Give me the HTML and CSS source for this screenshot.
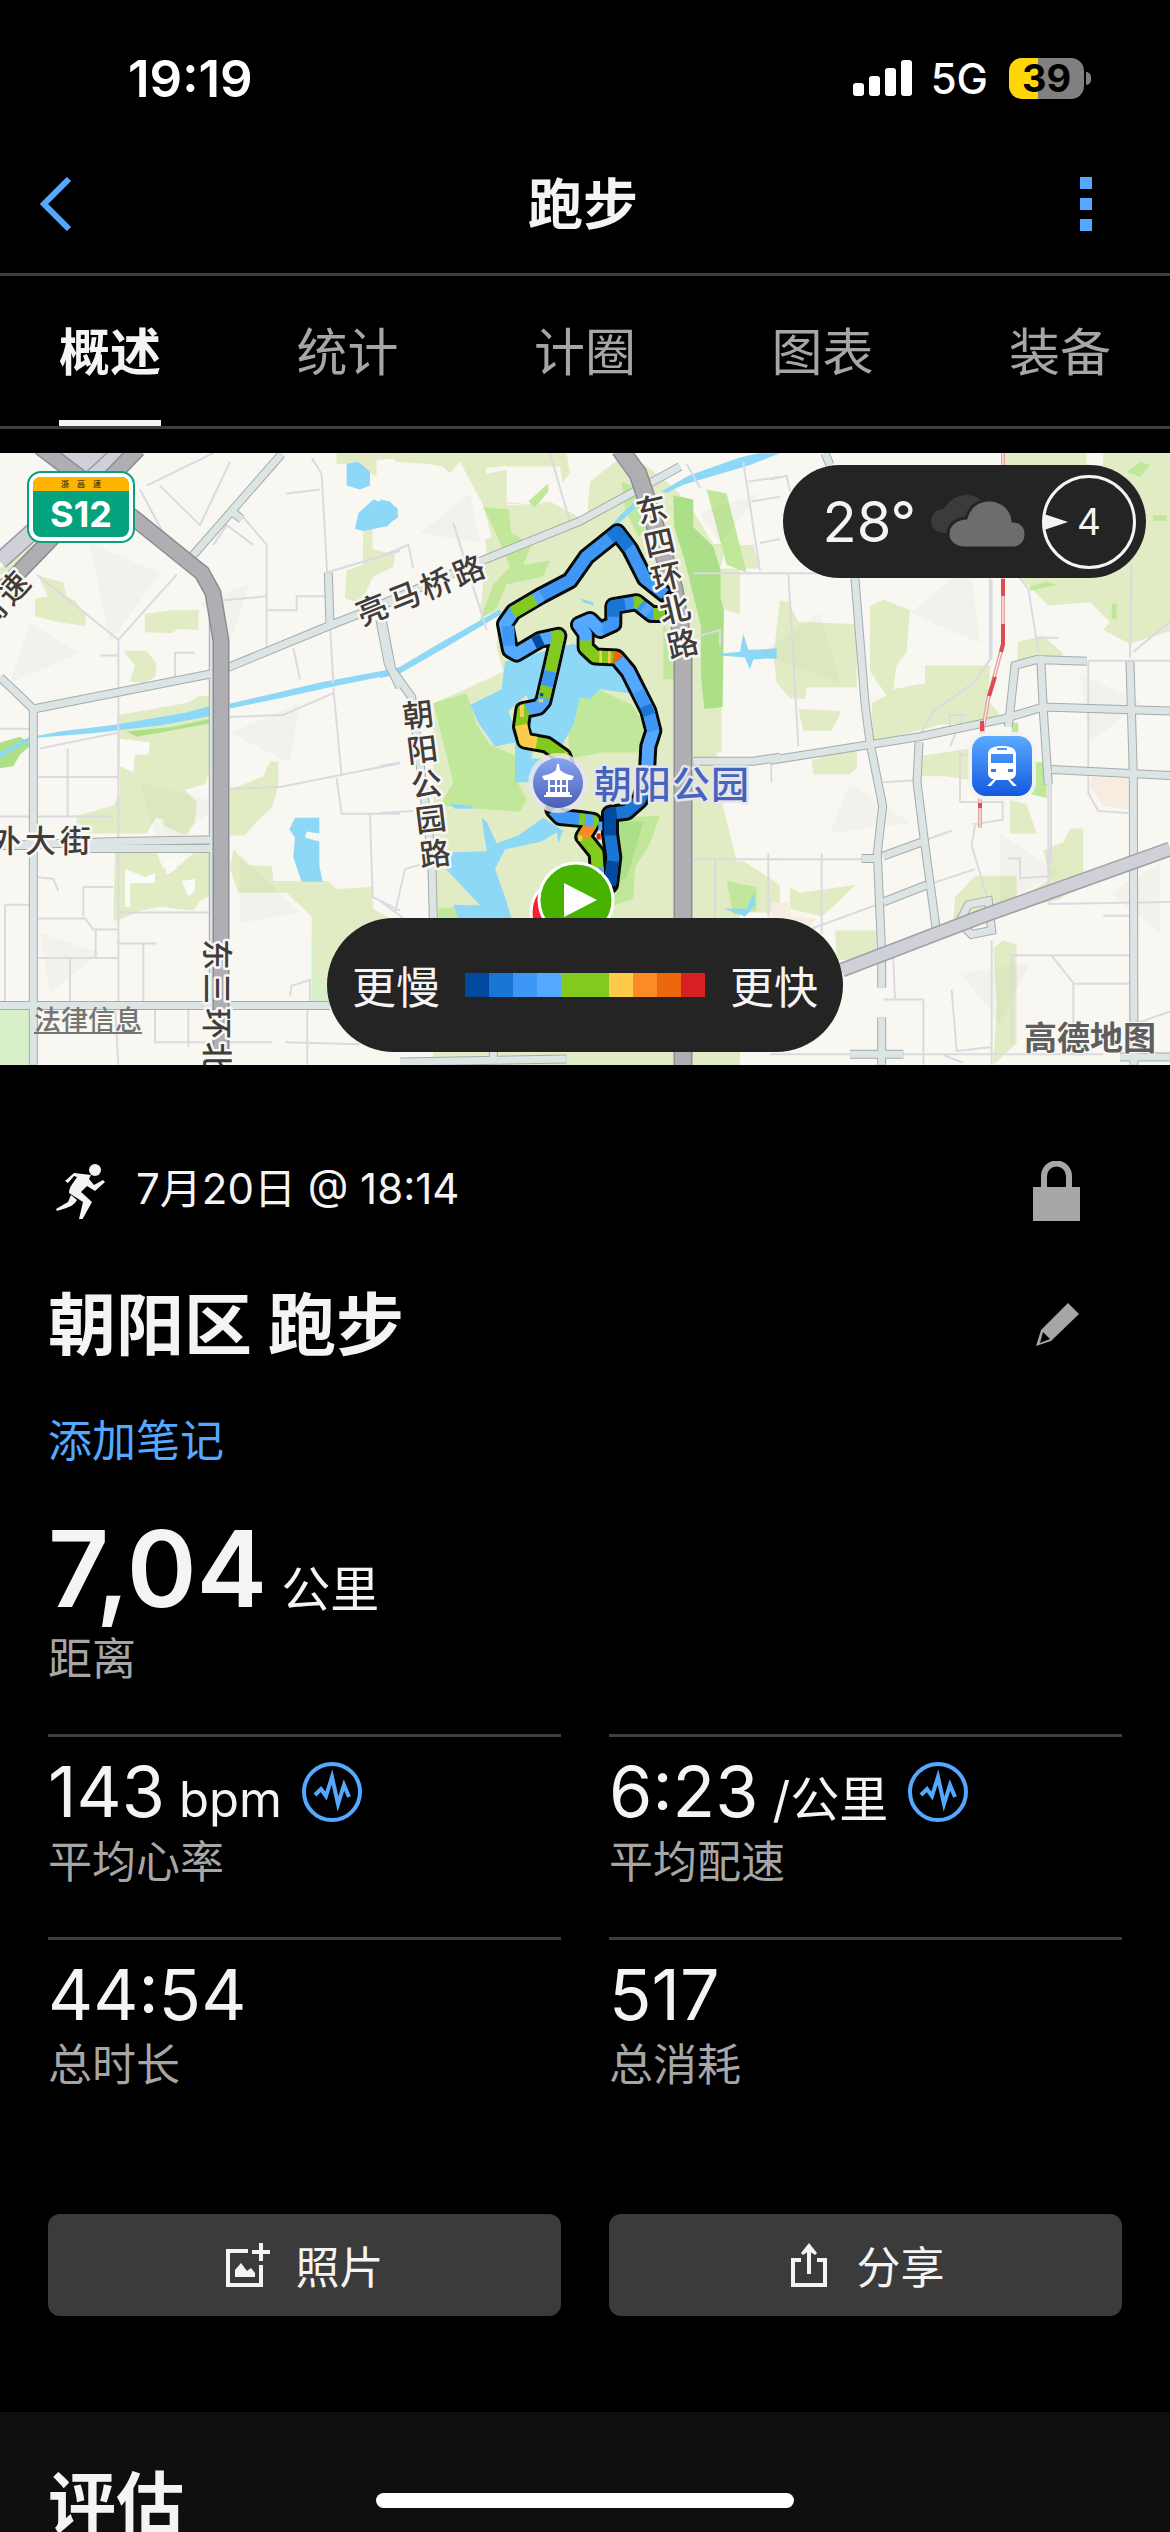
FILE: index.html
```html
<!DOCTYPE html>
<html lang="zh-CN">
<head>
<meta charset="utf-8">
<meta name="viewport" content="width=device-width, initial-scale=1">
<title>跑步</title>
<link rel="stylesheet" href="styles.css">
</head>
<body>
<div class="app">
  <div class="status">
    <span class="clock">19:19</span>
    <div class="status-right">
      <svg class="signal" viewBox="0 0 59 38" aria-hidden="true"><g fill="#fff"><rect y="24" width="11" height="13" rx="3"/><rect x="16" y="17" width="11" height="20" rx="3"/><rect x="32" y="9" width="11" height="28" rx="3"/><rect x="48" y="1" width="11" height="36" rx="3"/></g></svg>
      <span class="network">5G</span>
      <div class="battery"><span class="battery-body">39</span><span class="battery-nub"></span></div>
    </div>
  </div>

  <header class="header">
    <button class="icon-btn back" aria-label="返回"><svg width="32" height="54" viewBox="0 0 32 54"><path d="M29 2 4 27l25 25" fill="none" stroke="#55a8ff" stroke-width="6"/></svg></button>
    <h1>跑步</h1>
    <button class="icon-btn" aria-label="更多"><svg width="12" height="54" viewBox="0 0 12 54"><path d="M0 0h12v12H0zM0 21h12v12H0zM0 42h12v12H0z" fill="#55a8ff"/></svg></button>
  </header>

  <nav class="tabs">
    <a class="active" href="#overview">概述</a>
    <a href="#stats">统计</a>
    <a href="#laps">计圈</a>
    <a href="#charts">图表</a>
    <a href="#gear">装备</a>
  </nav>

  <main class="content">
    <section class="map">
      <svg class="map-art" viewBox="0 0 1170 612" role="img" aria-label="路线地图">
        <defs>
          <linearGradient id="poi" x1="0" y1="0" x2="0" y2="1"><stop offset="0" stop-color="#86a3f0"/><stop offset="1" stop-color="#4a5fb9"/></linearGradient>
          <linearGradient id="rail" x1="0" y1="0" x2="0" y2="1"><stop offset="0" stop-color="#5aaaff"/><stop offset="1" stop-color="#1459e0"/></linearGradient>
        </defs>
        <rect width="1170" height="612" fill="#f8f7f2"/>

        <!-- parks and water -->
        <g transform="matrix(.3333 0 0 .3954 0 -3)">
          <g fill="#e1ecc4">
            <path d="M85 240 135 235 60 310 0 315V300zM115 318l75 17 10 35 25 10 33 40-3 25-85-10-65-15v-45l40-3zM435 415l80-10h82l-2 50-60-2-20 10-80-2zM370 508h70l30 32-5 35-35 15-40-5 15-40z"/>
            <path d="M355 670l205-30 40-18h35v178l-20 45-60 15 35 30-5 50-25 35-70-25-50 20H230v-45l110-25 20-30zM345 1015l125 5 20 40 50-10 40-30h60v105l-40 15-20 25-100-10-60 10-65 25h-15z"/>
            <path d="M690 860l100-35 20-37h25v62l-20 55-45 35-35 35h-45zM700 1010l45 40 70 2 5 38 165 0 25 20 105-5 5 55 80 40v200H935v-220l-75-60H715l-25-60zM1010 8h190v12l-70 5v40l-90-30h-30zM1090 200h28v50l67 15-5 30-60 25-40 70-45-15 5-70 48-15z"/>
          </g>
          <path fill="#fafaf6" d="M375 1060l60 20 30-10v25h-75v60h-15zM545 1090l40-5v30l-20 15zM490 1035l40-5v30l-30 15zM360 730l90 10-5 30-40 0-5 45-40-15zM468 930l22 5v35h-50z"/>
          <path fill="#aee08a" d="M0 740l60-15 35 20-35 25-20 30-40 5zM380 712l140-12 120-22v12l-130 20-100 15z"/>
          <path fill="#d8f0c9" d="M0 1410h90v145H0zM945 1345h50v60h-60v-167h10z"/>
          <g fill="#8dd8f6">
            <path d="M0 765l85-38 95-15 170-18 210-30 75-18v26l-150 24-200 20-175 12-25 10-85 40zM688 642l162-32 110-22 240-38v14l-200 34-150 28-160 28zM1040 35l35-5 35 25v35l-30 10-40-10zM1065 200l10-40 45-35 70 20 5 25-45 25-60 10zM885 930h73v40l-38-5-5 15 43 10v60l10 42-63 0-25-62 5-50-17-20z"/>
          </g>
        </g>
        <g transform="matrix(.3333 0 0 .3954 380 -3)">
          <path fill="#e1ecc4" d="M20 8H560l10 50-60 70-60 12-70-5V40l-60 5-50 65-20-60-110-15-90-5zM320 60l60-10v90h70l60-10 110 50 10-100 90-60 70 15 90 60 150 130 50 10v530h-70v70l70 240v530H160V640l110-40 100-40-20-60 5-80-55-10 20-150-20-130-90-70-60-52h150zM1020 300h120l-20-60h-80zM940 1040h150l110 60v70H940z"/>
          <path fill="#f8f7f2" d="M380 42h160l15 80-105 15-70-5zM240 30l70 110 25 80-60 20-100-30-20-100zM870 8h330v230h-200l-80-110zM1025 400l175 50v320h-175z"/>
          <path fill="#c1e79a" d="M310 145l75 5 10 60 60 30-25 50 80-10-20 40-110 20-30 60-50 30 40-90 50-45-40-80zM445 130l60-45v20l-40 40zM160 640l100-25 30 80 40 50 80 30 0 60 30 50-20 30-240-15 40-60zM600 620l55-15 100 40 35 40-5 80-120 0-95 15-5-60zM700 930l140-5-30 70-45 60-5 80-70 20zM725 80l60 20 30 80-40 40-40-70zM850 430l35 80v70h-35zM1040 1090l90 15 0 60-70 10zM175 1160l120-10 20 40H175zM980 100l60 10 60 200-60-20z"/>
          <path fill="#abdf88" d="M880 115l60 10v70l60 50 22 60v70l10 30-4 245-55 5-10-80v-130l-50-170-30-80zM710 940l80 0-20 60-30 80-40 20z"/>
          <path fill="#8dd8f6" d="M375 535l205-45 90 20 60 60 20 45-90-10-30 25-30-5-20 70-40 60h-80l-10 40 40 25-10 20h-75v-100l-60 10-50-60-25-45 95-40zM415 780h80l30 60H405v-60zM200 1018l120-3-15-85 15 10 30 55 65-20 75-45 55 30-60 30-110 20-30 50 30 70 20 55H235l-15-35 80 2-60-55-40-35zM600 375l40 10v8l-30-8zM210 895l60 4 15 8-60 0zM530 965l20-5-15 35zM1020 515l60-5 10-45 15 40 95-2v22l-80 5-10 25-15-30-75-5zM1030 1160l70 0 20-40 6 30-30 30zM0 125l30 5 25 22-15 25-20 18-20-5zM720 165l60-45-5 20-70 55-15 0zM845 105l80-40 150-45 60-12h65l-90 30-200 50-50 20zM0 568l60-20 120-60 180-85 5 12-170 85-135 65-60 12z"/>
          <path fill="#e1ecc4" d="M410 640l30-20 15 40-50 20zM385 660l20-15v60z"/>
        </g>
        <g transform="matrix(.3333 0 0 .3954 770 -3)">
          <path fill="#e1ecc4" d="M30 380l25 5 30 50 175 5v160H110l-5 30-45-2-40-40-10-68 10-70zM300 395l40-17 80 27-10 105-30 35-10 60 95-15 0-45h195l-5 90 45 45-70 10-120 5-200 45-5-100 45-20-50-60zM700 8h250l0 30 50 0V8h200v450l-120 32-80-35 20-20-60-50-125 8-75-63-60-20zM745 485l75-15 60 45-20 20-120 10zM125 785l135-40 0 60-20 15H130zM440 775l160-20v80l-70-10-90 0zM720 885l50 10 30 75h-80zM820 1012l60-20 20-35h40v120l-70 60-320 60 5-65 60-55h125v60l100-50zM60 1105l30 15 165-20-60 50-40 30-95-20zM195 1215h125v75l-120 0zM670 1260l30-20 40 10v250l-70 55 10-155zM85 655l130 5-30 50-85 0z"/>
          <path fill="#bfe89a" d="M725 690h20v30h-20zM780 790h50v90l-50-10zM1070 55l40-25 30 8-30 30zM1150 165h40v14h-40zM780 345l50-12 30 8-80 15zM1025 388h15v40h-15z"/>
          <path fill="#f6ecdf" d="M965 825h110v85l-75-10-40-50zM5 1145l50 0 10 35 75 5-20 20H5z"/>
          <path fill="#8dd8f6" d="M0 502h20v26H0z"/>
        </g>

        <!-- soft relief facets -->
        <g fill="#8b8b70" opacity=".05"><path d="M90 90 160 120 110 190zM30 170l50 30-70 30zM200 150l50-20-20 60zM140 330l80 20-60 50zM230 280l70-30-10 60zM240 400l60 60-60 10zM40 480l60 20-50 40zM420 80l50-40 10 50zM700 60l60-20-40 50zM760 200l60-40 20 70zM850 330l60 40-80 10zM910 160l60-50 10 80zM1000 380l60 40-60 30zM1080 220l60 30-50 40zM760 480l60 30-50 30zM960 520l70-10-30 60zM1110 440l50-30v70z"/></g>

        <!-- side streets -->
        <g class="lane">
          <g transform="matrix(.3333 0 0 .3954 0 -3)">
            <path d="M355 480V1400M355 480l175-165M355 480 110 315M0 705h100M120 755l240-41M115 827h240M0 927h340M203 755v172M690 675l160-5 150-55M1000 590l-35-530-30-40M980 310l220-55M800 500V240l-90-90M670 380l130-10M800 405h90v-35h90M690 857l150-5 360-60M1000 600l25 225M1010 830l15 90h175M1110 920l8 210 82 35M300 520h55M525 575v-62h60M440 90l200-82M420 100l70 110M480 90l120 100 90-160M110 1080l50 5 15 30M15 1150h75M15 1150v260M110 1185h145l25 28h75M287 1215v70M110 1285h245M210 1285v115M350 1248h120M430 1248v155M355 1170h285M345 1400l10 155M465 1400v98h350M855 1498l225 5M922 1410v145M870 1380l5-25 55-15v60M565 1400v110M250 1105h90M250 1105v75M640 240l40-50 80 50M860 110l100-10M990 440l10 150M880 500l20 80"/>
          </g>
          <g transform="matrix(.3333 0 0 .3954 380 -3)">
            <path d="M510 8l60 175M220 185l100 270M0 270l85-30 15 60M940 312h260M1090 30l50 275M1105 80l95-12M1115 130l85-12M920 35l40 60M0 800l60-10M0 918l100-5M75 1060l80-20M75 1060l-30 110M0 1140l80 50M940 1035h260M1165 1020v160M1005 1035v150M960 470l60-15v40M1140 235l60-10M1174 780v60M60 1548h500"/>
          </g>
          <g transform="matrix(.3333 0 0 .3954 770 -3)">
            <path d="M0 312h240M55 310l30 440M0 75l50-10 10 40M660 325v205l-50 60-120 70-40 60M540 750l40-80h-40v40M745 320l30 30 30 160M1085 285l-5 240M1090 510l110-75M955 533v335l30 45 90 5M955 533h245M835 845v300M843 845v200M835 1148l365-5M0 1035h320M155 1020v205M110 1215l210-65M370 1285l5 105M340 1390h120v165M545 1365l15 155 105-10M665 1240v315M725 1500v-222h355M845 1278l65 70v142M910 1350h170M715 1033h35v50l85-5M615 950l-10 50 50 140M490 1095l125-35M470 985l75-22M340 840l100-5M570 890V770h35M570 890h128v45l-90 12M1000 1178h80M0 1528h1000M800 475h65M520 1530l60 20M1100 1450l100-30M665 330v200"/>
          </g>
        </g>

        <!-- secondary roads: casing, then fill -->
        <g class="road-case">
          <g transform="matrix(.3333 0 0 .3954 0 -3)"><path d="M0 575l45 35 55 45v900M100 655l540-90 50-17 310-108 200-65M845 10 570 275M695 155l30 20M0 1405h990M985 310l5 130M1140 430l25 110 35 60M640 400v1000M420 190l150 90M0 1000h100M640 986 350 990 0 1000M640 1008 270 1008"/></g>
          <g transform="matrix(.3333 0 0 .3954 380 -3)"><path d="M0 392l320-117 280-95 300-138M0 400l35 155 60 70 60 400 5 160M940 787h180l80-10M60 1548l500-8M340 1520v25"/></g>
          <g transform="matrix(.3333 0 0 .3954 770 -3)"><path d="M165 8l15 30M255 325l30 315 15 100 38 160-16 120 13 250v90M335 1435v120M0 785l450-60 250-45 120-30 380 10M447 740l-6 100 24 160 35 220M340 1027l120-37M340 1143l130-43M715 700l20-155 65-15 150 4M812 520l8 140 15 185M845 808l355 15M1080 535l10 285 2 735M240 1528h160M1050 1535h150M275 1033h50M570 1190l25-40 60-10 10 75-60 10-30-25"/></g>
        </g>
        <g class="road">
          <g transform="matrix(.3333 0 0 .3954 0 -3)"><path d="M0 575l45 35 55 45v900M100 655l540-90 50-17 310-108 200-65M845 10 570 275M695 155l30 20M0 1405h990M985 310l5 130M1140 430l25 110 35 60M640 400v1000M420 190l150 90M0 1000h100M640 986 350 990 0 1000M640 1008 270 1008"/></g>
          <g transform="matrix(.3333 0 0 .3954 380 -3)"><path d="M0 392l320-117 280-95 300-138M0 400l35 155 60 70 60 400 5 160M940 787h180l80-10M60 1548l500-8M340 1520v25"/></g>
          <g transform="matrix(.3333 0 0 .3954 770 -3)"><path d="M165 8l15 30M255 325l30 315 15 100 38 160-16 120 13 250v90M335 1435v120M0 785l450-60 250-45 120-30 380 10M447 740l-6 100 24 160 35 220M340 1027l120-37M340 1143l130-43M715 700l20-155 65-15 150 4M812 520l8 140 15 185M845 808l355 15M1080 535l10 285 2 735M240 1528h160M1050 1535h150M275 1033h50M570 1190l25-40 60-10 10 75-60 10-30-25"/></g>
        </g>

        <!-- expressways -->
        <path d="M45 0h87L90 30H75z" fill="#d0d0d8"/>
        <g fill="none">
          <path d="M125-5 0 108" stroke="#9c9ca4" stroke-width="18"/><path d="M125-5 0 108" stroke="#d0d0d8" stroke-width="15"/>
          <path d="M842 517 983 463 1170 396" stroke="#a0a0a8" stroke-width="15"/><path d="M842 517 983 463 1170 396" stroke="#d0d0d8" stroke-width="12"/>
          <path d="M138-4 24 114 0 139M40-6l95 72 67 54 11 20 8 48v428" stroke="#8d8d93" stroke-width="17"/>
          <path d="M138-4 24 114 0 139M40-6l95 72 67 54 11 20 8 48v428" stroke="#aeaeb3" stroke-width="14"/>
          <path d="M620-4l18 25 12 35 24 80 9 55v425" stroke="#8d8d93" stroke-width="19"/>
          <path d="M620-4l18 25 12 35 24 80 9 55v425" stroke="#aeaeb3" stroke-width="16"/>
          <path d="M1003 0v191l-15 56-6 35M980 345v30" stroke="#e9a3a3" stroke-width="4"/>
          <path d="M1003 0v191l-15 56-6 35M980 345v30" stroke="#fff" stroke-width="1"/>
          <path d="M1003 126v17m0 28v20l-2 8m-6 25-6 19m-7 25v10m-2 72v5" stroke="#dd4c50" stroke-width="4"/>
        </g>

        <!-- recorded track, coloured by pace -->
        <g transform="matrix(.3333 0 0 .3954 380 -3)">
          <g class="track-case">
            <path d="M855 415H815L770 385 700 395V440L660 455 630 430 597 442 617 465V500L645 522 710 525 745 560 805 660 820 710 805 750 800 830 780 885 740 915 690 920V970L700 1030 690 1100"/>
            <path d="M855 365 795 325 750 250 712 208 620 270 570 330 480 370 400 410 375 440 390 505 410 515 480 480 535 470 515 545 490 635 475 650 430 658 423 700 435 735 500 745 550 775 560 800M520 910 540 928 600 933 640 938 610 978 650 1020 655 1090"/>
          </g>
          <g class="track">
            <path stroke="#3f97f5" d="M855 365 795 325 750 250 712 208 620 270 570 330 480 370 400 410"/>
            <path stroke="#1a76d5" d="M748 247 712 208 690 223"/>
            <path stroke="#55a8ff" d="M485 368 400 410 375 440 390 505 410 515 480 480 535 470 515 545 490 635 475 650 430 658"/>
            <path stroke="#83ca1f" d="M465 378 398 411"/>
            <path stroke="#004b9f" d="M462 489 486 479"/>
            <path stroke="#83ca1f" d="M515 474 535 470 515 545 511 560M500 597 492 628M440 656 430 658 423 700 435 735 500 745 550 775 560 800"/>
            <path stroke="#3f97f5" d="M385 445 387 495M511 560 500 597"/>
            <path stroke="#fdca4c" d="M424 695 435 735 470 741M420 660H432M543 771 552 785"/>
            <path stroke="#3f97f5" d="M855 415H815L770 385 700 395V440L660 455 630 430 597 442 617 465V500"/>
            <path stroke="#1a76d5" d="M735 390 700 395V422"/>
            <path stroke="#83ca1f" d="M855 415H820M762 386 770 385 780 392M617 480V500L645 522 710 525"/>
            <path stroke="#55a8ff" d="M808 410 790 398M665 453 660 455 630 430 597 442 617 465V482"/>
            <path stroke="#fdca4c" d="M658 523H666M684 524H692"/><path stroke="#eb680e" d="M700 524 710 525 716 531"/>
            <path stroke="#55a8ff" d="M716 531 745 560 805 660 820 710 805 750 800 830 780 885"/>
            <path stroke="#3f97f5" d="M775 610 805 660 820 710"/>
            <path stroke="#1a76d5" d="M797 647 808 670M803 800 800 830 780 885 740 915 690 920V970L700 1030 690 1100"/>
            <path stroke="#004b9f" d="M710 918 690 920V975M699 1040 690 1100"/>
            <path stroke="#3f97f5" d="M520 910 540 928 600 933"/>
            <path stroke="#83ca1f" d="M598 933 640 938 610 978 650 1020 655 1090"/>
            <path stroke="#fb8a27" d="M632 948 610 978"/><path stroke="#55a8ff" d="M615 935 640 938M654 1055V1090"/>
          </g>
          <path fill="#d62021" d="M650 970h12v15h-12z"/><path fill="#55a8ff" d="M655 940h12v22h-12z"/><path fill="#fdca4c" d="M476 630h14v8h-14zM595 975h12v14h-12z"/><path fill="#004b9f" d="M480 615h10v8h-10z"/>
        </g>

        <!-- start and finish pins -->
        <circle cx="567" cy="460" r="36" fill="#ff1f2b" stroke="#fff" stroke-width="3"/>
        <circle cx="576" cy="447" r="37" fill="#47b300" stroke="#fff" stroke-width="3"/>
        <path d="M564 430v34l33-17z" fill="#fff"/>

        <!-- park marker -->
        <circle cx="558" cy="330" r="30" fill="#e6e6ea" opacity=".85"/>
        <circle cx="558" cy="330" r="25" fill="url(#poi)"/>
        <path fill="#fff" d="M557 311h2l1 6c3 3 8 5 14 6l-2 4h-28l-2-4c6-1 11-3 14-6zM548 327h2v13h-2zM555 327h2v13h-2zM560 327h2v13h-2zM566 327h2v13h-2zM548 332h20v2h-20zM546 339h24v3h-24zM544 342h28v2h-28z"/>

        <!-- station marker -->
        <rect x="968" y="279" width="68" height="68" rx="18" fill="#f2f2ef" opacity=".9"/>
        <rect x="972" y="283" width="60" height="60" rx="14" fill="url(#rail)"/>
        <path fill="#fff" fill-rule="evenodd" d="M988 301c0-6 6-8 14-8s14 2 14 8v19c0 4-3 6-6 6l7 7h-4l-5-6h-12l-5 6h-4l7-7c-3 0-6-2-6-6zM997 295v2h10v-2zM991 301v9h22v-9zM991 316v3h5v-3zM1008 316v3h5v-3z"/>

        <!-- highway shield -->
        <rect x="28" y="19" width="106" height="70" rx="13" fill="#fff" stroke="#05a27e" stroke-width="2"/>
        <rect x="33" y="24" width="96" height="60" rx="8" fill="#05a27e"/>
        <path d="M33 38v-6q0-8 8-8h80q8 0 8 8v6z" fill="#ffb400"/>
        <text class="shield-top" x="65 81 97" y="34">浙高速</text>
        <text class="shield" x="81" y="74">S12</text>

        <!-- road and place names -->
        <g class="label">
          <text transform="translate(362 173) rotate(-22)" x="0 35 69 104" y="0">亮马桥路</text>
          <text transform="translate(-12 180) rotate(-48)" x="0 35" y="0">高速</text>
          <text x="-10 25 60" y="399">外大街</text>
          <text transform="translate(404 275) rotate(-7)" x="0" y="0">朝<tspan x="0" y="35">阳</tspan><tspan x="0" y="70">公</tspan><tspan x="0" y="105">园</tspan><tspan x="0" y="140">路</tspan></text>
          <text transform="translate(639 71) rotate(-13)" x="0" y="0">东<tspan x="0" y="34">四</tspan><tspan x="0" y="69">环</tspan><tspan x="0" y="103">北</tspan><tspan x="0" y="138">路</tspan></text>
          <text transform="translate(206 486) rotate(90)" x="0 34 69 103" y="0">东三环北</text>
        </g>
        <text class="park-label" x="594 633 672 711" y="345">朝阳公园</text>
        <text class="brand" x="1024" y="597">高德地图</text>
      </svg>

      <a class="legal" href="#legal">法律信息</a>

      <div class="weather">
        <span class="temp">28°</span>
        <svg width="94" height="54" viewBox="0 0 94 54" aria-hidden="true"><path d="M14 38C5 38 0 32 0 26s5-12 13-12C18 5 26 0 36 0c8 0 14 4 18 10v28z" fill="#3b3b3b"/><path d="M33 53c-9 0-16-6-16-14 0-9 7-15 18-16C38 12 47 5 58 5c13 0 23 9 24 21 7 0 13 5 13 13 0 8-5 14-13 14z" fill="#6d6d6d" stroke="#242424" stroke-width="3"/></svg>
        <div class="wind"><svg class="wind-arrow" width="24" height="16" viewBox="0 0 24 16" aria-hidden="true"><path d="M0 0v16l24-8z" fill="#f4f4f4"/></svg><span>4</span></div>
      </div>

      <div class="legend">
        <span>更慢</span>
        <div class="scale"><i class="c1"></i><i class="c2"></i><i class="c3"></i><i class="c4"></i><i class="c5"></i><i class="c5"></i><i class="c6"></i><i class="c7"></i><i class="c8"></i><i class="c9"></i></div>
        <span>更快</span>
      </div>
    </section>

    <section class="summary">
      <div class="row meta">
        <div class="when">
          <svg width="56" height="56" viewBox="0 0 56 56" aria-hidden="true"><g fill="#f4f4f4"><circle cx="43" cy="7" r="6"/><path d="M22 10l17 2-2 4 5 6 9-5 2 2-10 9-8-5-6 6 11 10-10 18-3-1 4-17-14-9c0-6 5-11 8-16l-3-1-6 7-3-2zM19 32l6 5c-3 5-6 7-20 11l-1-2 12-7z"/></g></svg>
          <span>7月20日 @ 18:14</span>
        </div>
        <button class="icon-btn" aria-label="隐私"><svg width="47" height="60" viewBox="0 0 47 60"><path d="M0 26h47v34H0z" fill="#a6a6a6"/><path d="M11 28V15a12 12 0 0 1 25 0v13" fill="none" stroke="#a6a6a6" stroke-width="6"/></svg></button>
      </div>
      <div class="row name">
        <h2>朝阳区 跑步</h2>
        <button class="icon-btn" aria-label="编辑"><svg width="46" height="46" viewBox="0 0 46 46"><path d="M34 1l11 11-28 27L2 44 7 28z" fill="#a6a6a6"/><path d="M9 30l7 7-10 4z" fill="#000"/></svg></button>
      </div>
      <a class="note" href="#note">添加笔记</a>

      <div class="stat hero">
        <div class="value"><span class="big">7,04</span><span class="unit">公里</span></div>
        <div class="caption">距离</div>
      </div>

      <div class="grid">
        <div class="stat cell">
          <div class="value"><span class="num">143</span><span class="unit">bpm</span><svg class="pulse" viewBox="0 0 60 60"><circle cx="30" cy="30" r="28" fill="none" stroke="#55a8ff" stroke-width="4"/><path d="M13 33l6-6 5 7 6-19 6 27 6-19 5 12" fill="none" stroke="#55a8ff" stroke-width="4"/></svg></div>
          <div class="caption">平均心率</div>
        </div>
        <div class="stat cell">
          <div class="value"><span class="num">6:23</span><span class="unit">/公里</span><svg class="pulse" viewBox="0 0 60 60"><circle cx="30" cy="30" r="28" fill="none" stroke="#55a8ff" stroke-width="4"/><path d="M13 33l6-6 5 7 6-19 6 27 6-19 5 12" fill="none" stroke="#55a8ff" stroke-width="4"/></svg></div>
          <div class="caption">平均配速</div>
        </div>
        <div class="stat cell">
          <div class="value"><span class="num">44:54</span></div>
          <div class="caption">总时长</div>
        </div>
        <div class="stat cell">
          <div class="value"><span class="num">517</span></div>
          <div class="caption">总消耗</div>
        </div>
      </div>

      <div class="actions">
        <button><svg width="44" height="44" viewBox="0 0 44 44" aria-hidden="true"><path d="M22 8H2v34h33V22" fill="none" stroke="#f4f4f4" stroke-width="4"/><path d="M35 0v18M26 9h18" stroke="#f4f4f4" stroke-width="4"/><path d="M9 34v-7l6-7 6 8 4-3 4 5v4z" fill="#f4f4f4"/></svg>照片</button>
        <button><svg width="44" height="44" viewBox="0 0 44 44" aria-hidden="true"><path d="M14 17H6v25h32V17h-8" fill="none" stroke="#f4f4f4" stroke-width="4"/><path d="M22 31V6" stroke="#f4f4f4" stroke-width="4"/><path d="M22 0l8 10-2 2-6-4-6 4-2-2z" fill="#f4f4f4"/></svg>分享</button>
      </div>
    </section>

    <section class="review"><h2>评估</h2></section>
  </main>
  <div class="home-bar"></div>
</div>
</body>
</html>
```
FILE: styles.css
```css
* { box-sizing: border-box; }
body {
  margin: 0;
  background: #000;
  color: #f4f4f4;
  font-family: Inter, "Noto Sans CJK SC", sans-serif;
  font-size: 44px;
}
h1, h2 { margin: 0; font-weight: 700; }
button { font: inherit; color: inherit; border: 0; padding: 0; background: none; }
a { color: inherit; text-decoration: none; }
svg { display: block; flex: none; }

.app { position: relative; display: flex; flex-direction: column; height: 100vh; overflow: hidden; }

.status { display: flex; align-items: center; justify-content: space-between; height: 139px; padding: 17px 79px 0 128px; flex: none; color: #fff; }
.clock { font-size: 51px; font-weight: 600; }
.status-right { display: flex; align-items: center; }
.signal { width: 59px; height: 38px; }
.network { margin: 0 21px 0 19px; font-size: 42px; font-weight: 500; }
.battery { display: flex; align-items: center; gap: 2px; }
.battery-body {
  width: 75px; height: 41px; border-radius: 13px;
  background: linear-gradient(90deg, #ffd60a 39%, #808080 39%);
  color: #000; font-size: 38px; font-weight: 700; line-height: 41px; text-align: center;
}
.battery-nub { width: 5px; height: 13px; border-radius: 0 5px 5px 0; background: #808080; }

.header { display: flex; align-items: center; justify-content: space-between; height: 137px; padding: 0 78px 4px 40px; border-bottom: 3px solid #3d3d3d; flex: none; }
.header h1 { font-size: 55px; line-height: 60px; }
.header .icon-btn { width: 12px; }
.header .back { width: 46px; }

.tabs { display: flex; justify-content: space-between; height: 153px; padding: 0 59px; border-bottom: 3px solid #3d3d3d; flex: none; font-size: 51px; color: #a6a6a6; }
.tabs a { display: flex; align-items: center; border-bottom: 6px solid transparent; padding-top: 2px; }
.tabs .active { color: #f4f4f4; font-weight: 700; border-color: #f4f4f4; }

.content { flex: 1; min-height: 0; overflow-y: auto; scrollbar-width: none; padding-top: 24px; }

.map { position: relative; overflow: hidden; }
.map-art { width: 100%; height: auto; }
.map-art path { vector-effect: non-scaling-stroke; }
.lane { fill: none; stroke: #dadae0; stroke-width: 2; }
.road-case { fill: none; stroke: #a3adac; stroke-width: 9; }
.road { fill: none; stroke: #dce5e4; stroke-width: 7; }
.track-case { fill: none; stroke: #080a08; stroke-width: 18; stroke-linejoin: round; stroke-linecap: round; }
.track { fill: none; stroke-width: 12; stroke-linejoin: round; }
.label { font-size: 31px; font-weight: 500; fill: #3f3c3a; stroke: #f8f7f4; stroke-width: 5; stroke-linejoin: round; paint-order: stroke; }
.park-label { font-size: 38px; font-weight: 500; fill: #4663bd; stroke: #e4e6ea; stroke-width: 5; stroke-linejoin: round; paint-order: stroke; }
.brand { font-size: 33px; font-weight: 700; fill: #5e5e5e; stroke: #f8f8f4; stroke-width: 2; paint-order: stroke; }
.shield { font-size: 36px; font-weight: 700; fill: #fff; text-anchor: middle; }
.shield-top { font-size: 8px; font-weight: 700; fill: #5a4510; text-anchor: middle; }

.legal { position: absolute; left: 34px; bottom: 26px; font-size: 27px; font-weight: 500; line-height: 36px; color: #757572; text-decoration: underline; }

.weather { position: absolute; top: 12px; right: 24px; height: 113px; padding: 0 10px 0 40px; display: flex; align-items: center; border-radius: 57px; background: #242424; }
.temp { font-size: 56px; margin-right: 15px; }
.wind { position: relative; display: grid; place-items: center; width: 94px; height: 94px; margin-left: 17px; border: 3px solid #f4f4f4; border-radius: 50%; font-size: 37px; }
.wind-arrow { position: absolute; left: -1px; top: 36px; }

.legend { position: absolute; left: 50%; bottom: 13px; transform: translateX(-50%); display: flex; align-items: center; gap: 25px; height: 134px; padding: 0 25px; border-radius: 67px; background: #242424; white-space: nowrap; }
.scale { display: flex; }
.scale i { width: 24px; height: 24px; }
.c1 { background: #004b9f; }
.c2 { background: #1a76d5; }
.c3 { background: #3f97f5; }
.c4 { background: #55a8ff; }
.c5 { background: #83ca1f; }
.c6 { background: #fdca4c; }
.c7 { background: #fb8a27; }
.c8 { background: #eb680e; }
.c9 { background: #d62021; }

.summary { padding: 92px 48px 96px; }
.row { display: flex; align-items: center; justify-content: space-between; padding-right: 42px; }
.meta { height: 68px; font-size: 42px; }
.when { display: flex; align-items: center; gap: 28px; padding-left: 4px; line-height: 56px; }
.when span { padding-bottom: 4px; }
.name { height: 80px; margin-top: 60px; }
.name h2, .review h2 { font-size: 68px; line-height: 80px; }
.note { display: block; margin-top: 44px; line-height: 64px; color: #55a8ff; }

.value { display: flex; align-items: baseline; gap: 14px; }
.caption { line-height: 60px; color: #a6a6a6; }
.unit { font-size: 49px; }
.hero .value { height: 120px; line-height: 120px; margin-top: 36px; }
.big { font-size: 106px; font-weight: 600; }
.grid { display: grid; grid-template-columns: 1fr 1fr; column-gap: 48px; margin-top: 45px; }
.cell { border-top: 3px solid #3d3d3d; height: 203px; padding-top: 15px; }
.cell .value { height: 80px; line-height: 80px; }
.num { font-size: 70px; }
.pulse { width: 60px; height: 60px; margin-left: 6px; align-self: center; }

.actions { display: grid; grid-template-columns: 1fr 1fr; gap: 48px; margin-top: 74px; }
.actions button { display: flex; align-items: center; justify-content: center; gap: 26px; height: 102px; border-radius: 12px; background: #3b3b3b; }

.review { padding: 52px 48px; background: #0f0f0f; }
.home-bar { position: absolute; left: 50%; bottom: 24px; width: 418px; height: 15px; margin-left: -209px; border-radius: 8px; background: #fff; }
```
